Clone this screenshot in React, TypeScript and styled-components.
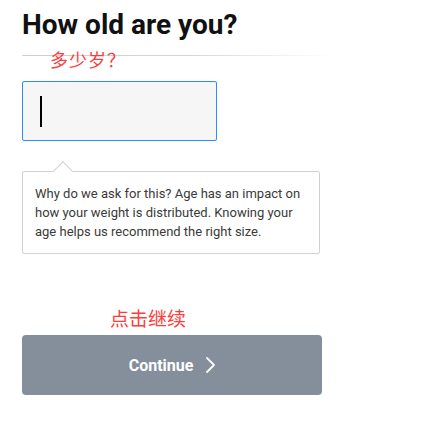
import React from "react";
import styled, { createGlobalStyle } from "styled-components";

const Global = createGlobalStyle`
  html, body { margin: 0; padding: 0; background: #ffffff; }
  body { font-family: Roboto, "Noto Sans", sans-serif; }
`;

const Page = styled.div`
  position: relative;
  padding: 8px 22px 0 22px;
  width: 300px;
`;

const Title = styled.h1`
  margin: 0;
  font-family: Roboto, sans-serif;
  font-weight: 700;
  font-size: 28px;
  line-height: 34px;
  color: #111111;
  white-space: nowrap;
`;

const Divider = styled.div`
  margin-top: 13px;
  width: 310px;
  height: 1px;
  background: linear-gradient(to right, #cfcfcf 0%, #d6d6d6 55%, rgba(230, 230, 230, 0) 100%);
`;

const InputBox = styled.div`
  box-sizing: border-box;
  margin-top: 25px;
  width: 195px;
  height: 60px;
  background: #f6f6f6;
  border: 1px solid #2a8ef5;
  border-radius: 2px;
  display: flex;
  align-items: center;
  padding-left: 17px;
`;

const Caret = styled.span`
  display: block;
  width: 1.5px;
  height: 31px;
  background: #000000;
`;

const Tooltip = styled.div`
  position: relative;
  box-sizing: border-box;
  margin-top: 30px;
  width: 298px;
  border: 1px solid #d2d2d2;
  border-radius: 2px;
  background: #ffffff;
  padding: 12px 14px 12px 12px;
  font-family: Roboto, sans-serif;
  font-size: 13px;
  line-height: 19px;
  color: #3a3a3a;

  &::before {
    content: "";
    position: absolute;
    top: -8px;
    left: 33px;
    width: 13px;
    height: 13px;
    background: #ffffff;
    border-top: 1px solid #d2d2d2;
    border-left: 1px solid #d2d2d2;
    transform: rotate(45deg);
  }
`;

const Button = styled.button`
  box-sizing: border-box;
  margin-top: 81px;
  width: 300px;
  height: 60px;
  border: none;
  border-radius: 4px;
  background: #848f9b;
  color: #ffffff;
  font-family: Roboto, sans-serif;
  font-weight: 700;
  font-size: 16px;
  display: flex;
  align-items: center;
  justify-content: center;
  gap: 13px;
  padding: 0;
  cursor: pointer;
`;

const Note = styled.div<{ $top: number; $left: number; $size: number; $spacing?: number }>`
  position: absolute;
  top: ${(p) => p.$top}px;
  left: ${(p) => p.$left}px;
  font-family: "Noto Sans CJK SC", sans-serif;
  font-size: ${(p) => p.$size}px;
  line-height: ${(p) => p.$size}px;
  letter-spacing: ${(p) => p.$spacing ?? 0}px;
  color: #ff3c3c;
  white-space: nowrap;
`;

export default function App() {
  return (
    <>
      <Global />
      <Page>
        <Title>How old are you?</Title>
        <Divider />
        <InputBox>
          <Caret />
        </InputBox>
        <Tooltip>
          Why do we ask for this? Age has an impact on how your weight is distributed. Knowing your age helps us
          recommend the right size.
        </Tooltip>
        <Button>
          <span>Continue</span>
          <svg width="9" height="16" viewBox="0 0 9 16" fill="none">
            <polyline points="1,1 8,8 1,15" stroke="#ffffff" strokeWidth="1.8" strokeLinecap="round" strokeLinejoin="round" />
          </svg>
        </Button>
        <Note $top={50} $left={50} $size={18} $spacing={1}>多少岁？</Note>
        <Note $top={308} $left={110} $size={19}>点击继续</Note>
      </Page>
    </>
  );
}
